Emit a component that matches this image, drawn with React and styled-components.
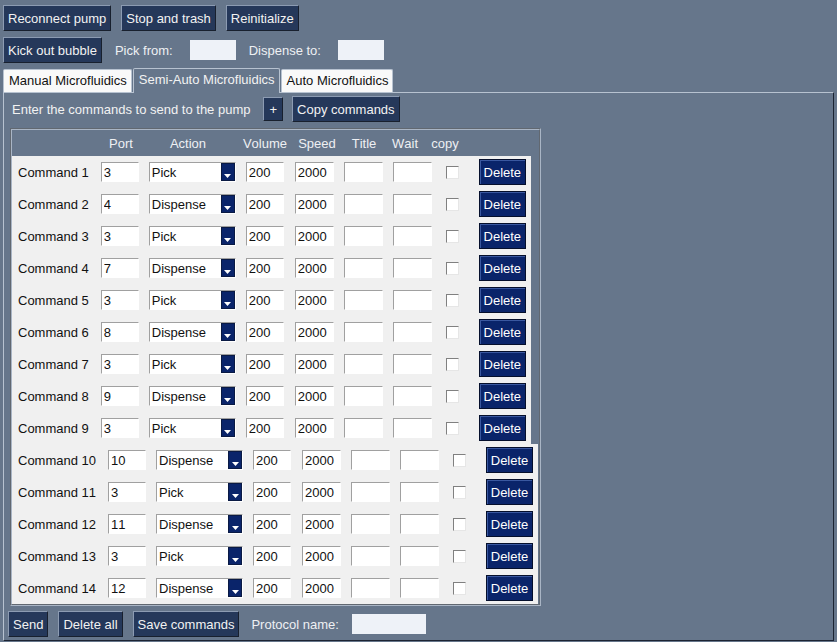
import React from "react";
import styled, { createGlobalStyle } from "styled-components";

const commands = [
  { port: "3", action: "Pick" },
  { port: "4", action: "Dispense" },
  { port: "3", action: "Pick" },
  { port: "7", action: "Dispense" },
  { port: "3", action: "Pick" },
  { port: "8", action: "Dispense" },
  { port: "3", action: "Pick" },
  { port: "9", action: "Dispense" },
  { port: "3", action: "Pick" },
  { port: "10", action: "Dispense" },
  { port: "3", action: "Pick" },
  { port: "11", action: "Dispense" },
  { port: "3", action: "Pick" },
  { port: "12", action: "Dispense" },
];

const headers = [
  { label: "Port", width: 40 },
  { label: "Action", width: 94 },
  { label: "Volume", width: 60 },
  { label: "Speed", width: 44 },
  { label: "Title", width: 50 },
  { label: "Wait", width: 32 },
  { label: "copy", width: 48 },
];

function App() {
  return (
    <Page>
      <GlobalStyle />
      <ButtonBar>
        <RaisedButton>Reconnect pump</RaisedButton>
        <RaisedButton>Stop and trash</RaisedButton>
        <RaisedButton>Reinitialize</RaisedButton>
      </ButtonBar>
      <ButtonBar>
        <RaisedButton>Kick out bubble</RaisedButton>
        <FieldLabel>Pick from:</FieldLabel>
        <LightEntry $width={46} />
        <FieldLabel>Dispense to:</FieldLabel>
        <LightEntry $width={46} />
      </ButtonBar>

      <TabStrip>
        <Tab>Manual Microfluidics</Tab>
        <Tab $active>Semi-Auto Microfluidics</Tab>
        <Tab>Auto Microfluidics</Tab>
      </TabStrip>

      <TabPanel>
        <IntroRow>
          <span>Enter the commands to send to the pump</span>
          <RaisedButton $small>+</RaisedButton>
          <RaisedButton>Copy commands</RaisedButton>
        </IntroRow>

        <CommandFrame>
          <HeaderRow>
            {headers.map((h) => (
              <HeaderCell key={h.label} $width={h.width}>
                {h.label}
              </HeaderCell>
            ))}
          </HeaderRow>
          {commands.map((c, i) => (
            <CommandRow key={i}>
              <RowLabel>Command {i + 1}</RowLabel>
              <Entry $width={38} defaultValue={c.port} />
              <Combo>
                <span>{c.action}</span>
                <ComboButton>
                  <svg width="7" height="4" viewBox="0 0 7 4">
                    <path d="M0 0h7L3.5 4z" fill="#fff" />
                  </svg>
                </ComboButton>
              </Combo>
              <Entry $width={38} $gap={11} defaultValue="200" />
              <Entry $width={39} defaultValue="2000" />
              <Entry $width={39} defaultValue="" />
              <Entry $width={39} defaultValue="" />
              <CheckBox />
              <DeleteButton>Delete</DeleteButton>
            </CommandRow>
          ))}
        </CommandFrame>

        <BottomBar>
          <RaisedButton>Send</RaisedButton>
          <RaisedButton>Delete all</RaisedButton>
          <RaisedButton>Save commands</RaisedButton>
          <FieldLabel>Protocol name:</FieldLabel>
          <LightEntry $width={74} />
        </BottomBar>
      </TabPanel>
    </Page>
  );
}

export default App;

const GlobalStyle = createGlobalStyle`
  html, body {
    margin: 0;
    background: #66768b;
  }
  body {
    font-family: "Liberation Sans", Arial, sans-serif;
    font-size: 13px;
    color: #f2f2f2;
    font-kerning: none;
    font-variant-numeric: tabular-nums;
  }
  * { box-sizing: border-box; }
`;

const Page = styled.div`
  display: flex;
  flex-direction: column;
  height: 642px;
  padding: 5px 3px 1px 3px;
`;

const ButtonBar = styled.div`
  display: flex;
  align-items: center;
  gap: 10px;
  margin-bottom: 6px;
`;

const RaisedButton = styled.button`
  height: ${(p) => (p.$small ? 24 : 26)}px;
  padding: 0 ${(p) => (p.$small ? 5 : 4)}px;
  background: #25385a;
  color: #f2f2f2;
  font: inherit;
  font-size: 13px;
  border: 1px solid;
  border-color: #8c9bb2 #18202e #18202e #8c9bb2;
  white-space: nowrap;
`;

const FieldLabel = styled.span`
  color: #eef0f3;
  margin-left: 3px;
  margin-right: 7px;
`;

const LightEntry = styled.div`
  width: ${(p) => p.$width}px;
  height: 20px;
  background: #eef2f8;
`;

const TabStrip = styled.div`
  display: flex;
  align-items: flex-end;
  height: 24px;
  margin-top: -1px;
`;

const Tab = styled.div`
  height: ${(p) => (p.$active ? 25 : 23)}px;
  padding: 3px 4px 0 5px;
  margin-right: 1px;
  margin-bottom: ${(p) => (p.$active ? -1 : 0)}px;
  background: ${(p) => (p.$active ? "#66768b" : "#f9f9f9")};
  color: ${(p) => (p.$active ? "#f2f2f2" : "#111")};
  border: 1px solid #b7c2d0;
  border-bottom: none;
  border-radius: 2px 2px 0 0;
  white-space: nowrap;
  position: relative;
  z-index: 1;
`;

const TabPanel = styled.div`
  flex: 1;
  display: flex;
  flex-direction: column;
  border: 1px solid;
  border-color: #b7c2d0 #1c2433 #1c2433 #b7c2d0;
  padding: 4px 0 0 0;
`;

const IntroRow = styled.div`
  display: flex;
  align-items: center;
  padding-left: 8px;
  height: 24px;

  & > span {
    margin-right: 13px;
  }
  & > button + button {
    margin-left: 9px;
  }
`;

const CommandFrame = styled.div`
  width: 531px;
  margin: 7px 0 0 6px;
  border: 2px groove #a9b5c5;
  display: flex;
  flex-direction: column;
  align-items: flex-start;
`;

const HeaderRow = styled.div`
  display: flex;
  align-items: center;
  height: 26px;
  padding-left: 89px;
  color: #eef0f3;
`;

const HeaderCell = styled.div`
  width: ${(p) => p.$width}px;
  text-align: center;
`;

const CommandRow = styled.div`
  display: flex;
  align-items: center;
  height: 32px;
  background: #f0f0f0;
  padding: 0 5px 0 6px;
  color: #111;
`;

const RowLabel = styled.span`
  margin-right: 12px;
  white-space: nowrap;
`;

const Entry = styled.input`
  width: ${(p) => p.$width}px;
  height: 20px;
  margin-right: ${(p) => p.$gap || 10}px;
  padding: 0 2px;
  background: #fff;
  border: 1px solid;
  border-color: #a0a0a0 #fff #fff #a0a0a0;
  font: inherit;
  font-size: 13px;
  color: #111;
  outline: none;
`;

const Combo = styled.div`
  width: 87px;
  height: 20px;
  margin-right: 10px;
  display: flex;
  align-items: center;
  justify-content: space-between;
  background: #fff;
  border: 1px solid;
  border-color: #a0a0a0 #fff #fff #a0a0a0;
  padding: 0 0 0 2px;
`;

const ComboButton = styled.div`
  width: 14px;
  height: 18px;
  background: #0a246a;
  display: flex;
  align-items: flex-end;
  justify-content: center;
  padding-bottom: 2px;
  border: 1px solid #0a1a44;
`;

const CheckBox = styled.div`
  width: 13px;
  height: 13px;
  margin: 0 20px 0 4px;
  background: #fff;
  border: 1px solid;
  border-color: #808080 #e6e6e6 #e6e6e6 #808080;
`;

const DeleteButton = styled.button`
  width: 47px;
  height: 26px;
  padding: 0;
  background: #0a246a;
  color: #fff;
  font: inherit;
  font-size: 13px;
  border: 1px solid #050f2c;
  box-shadow: inset 1px 1px 0 #3a58a0;
`;

const BottomBar = styled.div`
  display: flex;
  align-items: center;
  gap: 10px;
  padding-left: 4px;
  margin-top: 5px;

  & > span {
    margin-left: 2px;
    margin-right: 3px;
  }
`;
